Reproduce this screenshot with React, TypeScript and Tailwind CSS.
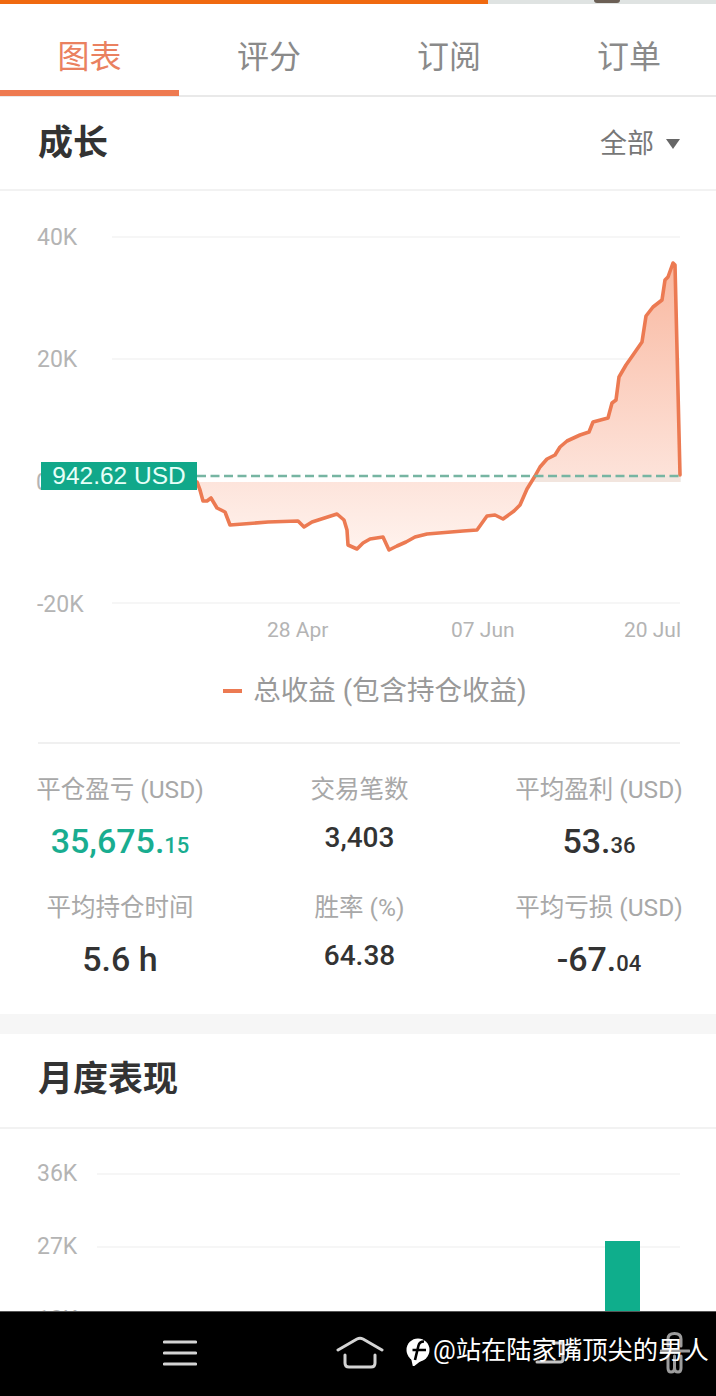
const LINE =
  "M197 482 L200 490 L203 501 L207 501 L211 498 L214 503 L217 508 L225 512 L230 525 L268 522 L298 521 L304 527 L312 522 L337 514 L344 520 L347 530 L348 545 L357 549 L363 543 L370 539 L383 537 L389 550 L397 546 L406 542 L415 537 L427 534 L463 531 L477 530 L487 516 L495 515 L503 519 L514 511 L520 505 L527 489 L535 476 L540 467 L547 459 L555 455 L560 447 L567 441 L580 435 L589 432 L593 422 L608 418 L612 403 L616 400 L619 377 L626 365 L633 355 L642 342 L646 316 L653 307 L662 300 L665 280 L668 277 L673 263 L675 265 L680 475";

function GrowthChart() {
  const yLabels: [string, number][] = [["40K", 245], ["20K", 367], ["-20K", 612]];
  return (
    <svg width="716" height="425" viewBox="0 191 716 425" className="block">
      <defs>
        <linearGradient id="area" gradientUnits="userSpaceOnUse" x1="0" y1="263" x2="0" y2="552">
          <stop offset="0" stopColor="#f9b8a0" />
          <stop offset="0.74" stopColor="#fde3da" />
          <stop offset="1" stopColor="#fff3ee" />
        </linearGradient>
      </defs>
      {[237, 359, 603].map((y) => <line key={y} x1="112" x2="680" y1={y} y2={y} stroke="#f3f3f3" strokeWidth="1.5" />)}
      {yLabels.map(([t, y]) => (
        <text key={t} x="37" y={y} fontSize="23" fill="#b4b4b4">{t}</text>
      ))}
      <text x="36" y="490" fontSize="23" fill="#b4b4b4">0</text>
      <path d={`${LINE} L680 482 Z`} fill="url(#area)" />
      <rect x="535" y="476" width="146" height="6" fill="#ece6e0" opacity="0.7" />
      <path d={LINE} fill="none" stroke="#ec7a52" strokeWidth="3.6" strokeLinejoin="round" strokeLinecap="round" />
      <line x1="197" x2="680" y1="476" y2="476" stroke="#76b5a2" strokeWidth="2.5" strokeDasharray="9 4.5" />
    </svg>
  );
}

function MonthlyChart() {
  return (
    <svg width="716" height="182" viewBox="0 1129 716 182" className="block">
      {[1174, 1247].map((y) => <line key={y} x1="97" x2="680" y1={y} y2={y} stroke="#f3f3f3" strokeWidth="1.5" />)}
      <text x="37" y="1181" fontSize="23" fill="#b4b4b4">36K</text>
      <text x="37" y="1254" fontSize="23" fill="#b4b4b4">27K</text>
      <text x="37" y="1327" fontSize="23" fill="#b4b4b4">18K</text>
      <rect x="605" y="1241" width="35" height="70" fill="#0fae8c" />
    </svg>
  );
}

function Stat({ label, children }: { label: string; children: React.ReactNode }) {
  return (
    <div className="w-[166px] flex flex-col items-center">
      <div className="h-[36px] leading-[36px] text-[24.5px] text-[#a8a8a8] whitespace-nowrap">{label}</div>
      <div className="h-[66px] flex items-center justify-center text-[#333] font-medium whitespace-nowrap">{children}</div>
    </div>
  );
}

function Money({ whole, cents, color = "text-[#333]" }: { whole: string; cents: string; color?: string }) {
  return (
    <span className={`${color} text-[34px] leading-none`}>
      {whole}.<span className="text-[22px]">{cents}</span>
    </span>
  );
}

export default function App() {
  return (
    <div className="relative w-[716px] h-[1396px] overflow-hidden flex flex-col bg-white font-['Roboto','Noto_Sans_CJK_SC',sans-serif]">
      <div className="h-[4px] flex bg-[#dfe3e2] shrink-0">
        <div className="w-[488px] bg-[#f0690f]" />
        <div className="ml-[106px] w-[26px] h-[3px] rounded-b-full bg-[#6b5f55]" />
      </div>

      <div className="h-[93px] shrink-0 flex border-b-2 border-[#e9e9e9]">
        <div className="w-[179px] shrink-0 h-[92px] flex items-center justify-center text-[32px] text-[#ea8160] border-b-[6px] border-[#ee7a50] pt-[20px]">图表</div>
        {["评分", "订阅", "订单"].map((t) => (
          <div key={t} className="w-[180px] shrink-0 h-[92px] flex items-center justify-center text-[32px] text-[#8a8a8a] pt-[14px]">{t}</div>
        ))}
      </div>

      <div className="h-[94px] shrink-0 flex items-center justify-between pl-[38px] pr-[36px] pt-[2px] border-b-2 border-[#f2f2f2]">
        <div className="text-[35px] font-bold text-[#333]">成长</div>
        <div className="flex items-center gap-[12px] text-[27px] text-[#777]">
          全部
          <span className="w-0 h-0 border-x-[7px] border-x-transparent border-t-[10px] border-t-[#666]" />
        </div>
      </div>

      <div className="relative h-[425px] shrink-0">
        <GrowthChart />
        <div className="absolute left-[41px] top-[271px] w-[156px] h-[28px] bg-[#11a88a] text-[#e6fff8] text-[24.5px] leading-[28px] text-center font-['Liberation_Sans',sans-serif]">942.62 USD</div>
      </div>

      <div className="h-[30px] shrink-0 relative text-[21px] text-[#b4b4b4] flex items-center">
        <span className="absolute left-[267px]">28 Apr</span>
        <span className="absolute left-[451px]">07 Jun</span>
        <span className="absolute right-[35px]">20 Jul</span>
      </div>

      <div className="h-[96px] shrink-0 flex items-center justify-center gap-[11px] pl-[34px] pb-[6px] text-[27.5px] text-[#999]">
        <span className="w-[19px] h-[4px] bg-[#ec7a52]" />
        总收益 (包含持仓收益)
      </div>

      <div className="ml-[38px] mr-[36px] h-[2px] shrink-0 bg-[#f0f0f0]" />

      <div className="shrink-0 pt-[28px] pl-[37px] pr-[34px] h-[270px] flex flex-col gap-[16px]">
        <div className="flex justify-between">
          <Stat label="平仓盈亏 (USD)"><Money whole="35,675" cents="15" color="text-[#19ad90]" /></Stat>
          <Stat label="交易笔数"><span className="text-[28px] mb-[6px]">3,403</span></Stat>
          <Stat label="平均盈利 (USD)"><Money whole="53" cents="36" /></Stat>
        </div>
        <div className="flex justify-between">
          <Stat label="平均持仓时间"><span className="text-[34px]">5.6 h</span></Stat>
          <Stat label="胜率 (%)"><span className="text-[28px] mb-[6px]">64.38</span></Stat>
          <Stat label="平均亏损 (USD)"><Money whole="-67" cents="04" /></Stat>
        </div>
      </div>

      <div className="h-[20px] shrink-0 bg-[#f6f6f6]" />

      <div className="h-[95px] shrink-0 flex items-center pl-[38px] border-b-2 border-[#f2f2f2] text-[35px] font-bold text-[#333]">月度表现</div>

      <div className="flex-1 min-h-0 overflow-hidden">
        <MonthlyChart />
      </div>

      <nav className="h-[85px] shrink-0 bg-black border-t border-[#555] relative flex items-center">
        <svg width="34" height="26" viewBox="0 0 34 26" className="ml-[163px] mt-[-2px]" stroke="#d4d4d4" strokeWidth="3.2" strokeLinecap="round">
          <path d="M1.5 2 H32.5 M1.5 13 H32.5 M1.5 24 H32.5" />
        </svg>
        <svg width="50" height="34" viewBox="0 0 50 34" className="ml-[138px] mt-[-2px]" fill="none" stroke="#d4d4d4" strokeWidth="3" strokeLinecap="round" strokeLinejoin="round">
          <path d="M3 14 L22 3 Q25 1.5 28 3 L47 14 M10 19 V27 Q10 31 14 31 H36 Q40 31 40 27 V19" />
        </svg>
        <svg width="32" height="24" viewBox="0 0 32 24" className="ml-[150px] mt-[-2px]" fill="none" stroke="#c4c4c4" strokeWidth="3" strokeLinecap="round">
          <path d="M2 21 H25 Q28 21 28 18 V4 Q28 2 26 2 H18" />
        </svg>
        <svg width="30" height="42" viewBox="0 0 30 42" className="ml-[93px] mt-[-3px]" fill="none" stroke="#9c9c9c" strokeWidth="3" strokeLinecap="round">
          <path d="M8 14 V7 Q8 1.5 14.5 1.5 Q21 1.5 21 7 V14 M1 19 H29 M8 24 V36 Q8 40 11 40 Q14.5 40 14.5 36 V24 M14.5 36 Q14.5 40 18 40 Q21 40 21 36 V24" />
        </svg>
      </nav>

      <div className="absolute left-[406px] top-[1336px] flex items-center gap-[3px] text-white text-[25.3px] leading-[30px] whitespace-nowrap">
        <svg width="24" height="30" viewBox="0 0 24 30" fill="white">
          <circle cx="12" cy="14" r="11.5" />
          <path d="M5 22 L16 24 L7 31 Z" />
          <path d="M18 5.5 Q13.5 5.5 12.5 9.5 L9 24 M6.5 14 H20" fill="none" stroke="black" strokeWidth="2.6" />
        </svg>
        @站在陆家嘴顶尖的男人
      </div>
    </div>
  );
}
